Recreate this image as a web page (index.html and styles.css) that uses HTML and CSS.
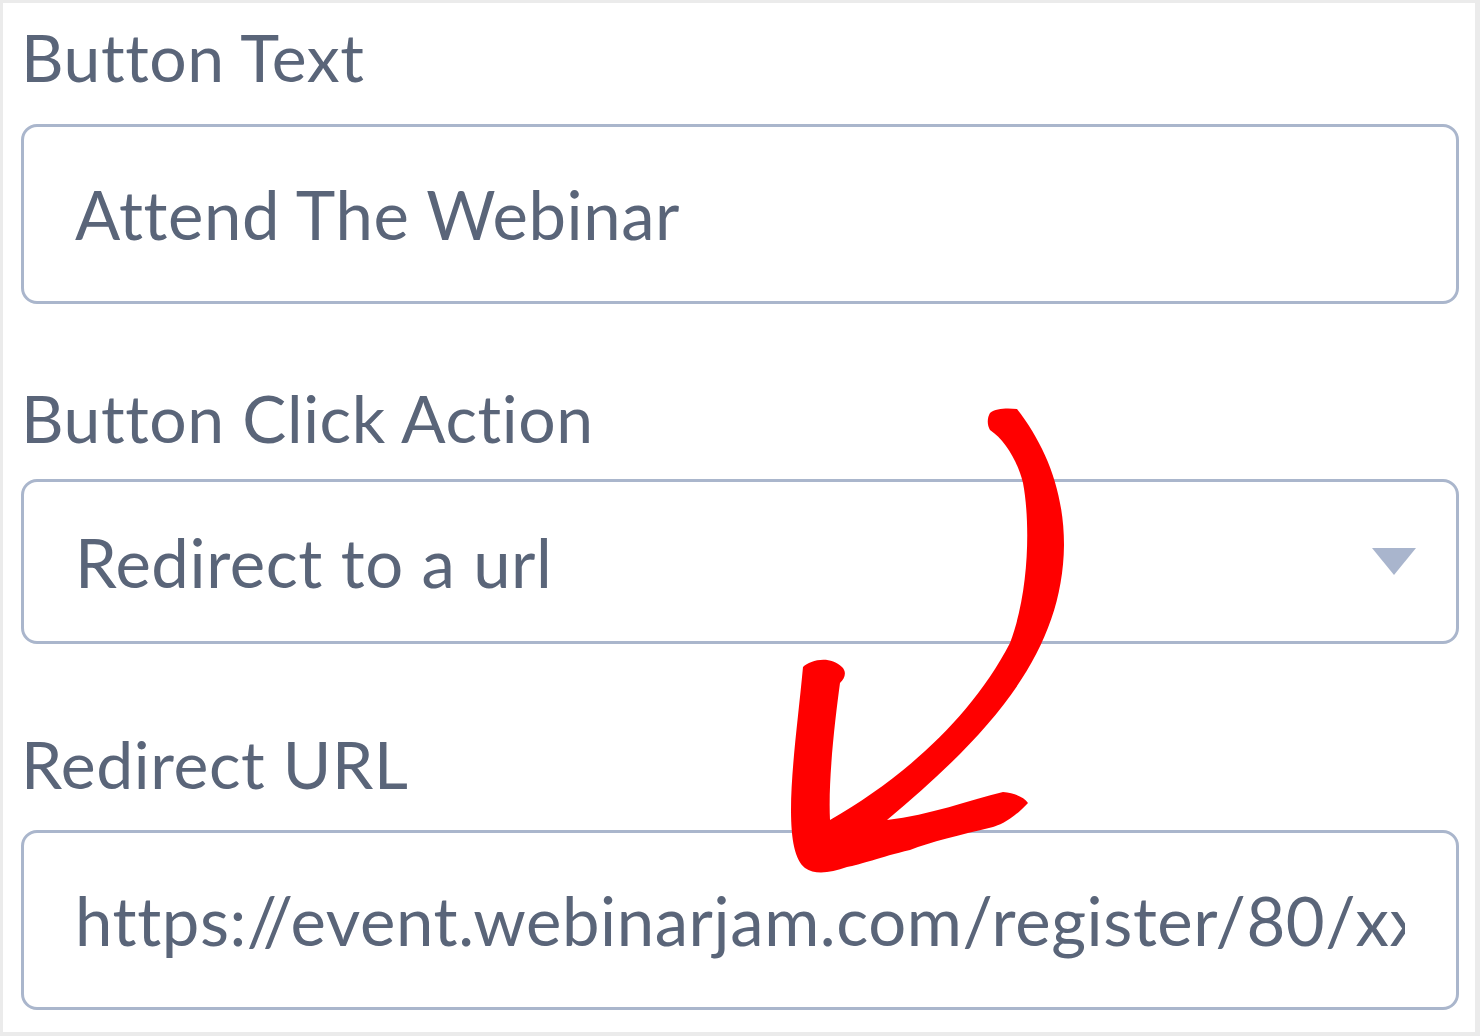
FILE: index.html
```html
<!DOCTYPE html>
<html lang="en">
<head>
<meta charset="utf-8">
<title>Button settings</title>
<link rel="stylesheet" href="styles.css">
</head>
<body>
<div class="frame">
  <div class="field field-first">
    <div class="label">Button Text</div>
    <div class="control control-tall">
      <span class="value">Attend The Webinar</span>
    </div>
  </div>
  <div class="field field-second">
    <div class="label">Button Click Action</div>
    <div class="control control-select">
      <span class="value">Redirect to a url</span>
      <span class="caret"></span>
    </div>
  </div>
  <div class="field field-third">
    <div class="label">Redirect URL</div>
    <div class="control control-tall">
      <span class="value value-clip">https://event.webinarjam.com/register/80/xxxxxxx</span>
    </div>
  </div>
  <svg class="arrow" width="1480" height="1036" viewBox="0 0 1480 1036" aria-hidden="true">
    <path fill="#ff0000" d="M 990 413 C 996 408 1008 408 1017 409 C 1045 445 1064 490 1064 545 C 1063 650 995 730 887 820 C 930 815 970 800 1003 792 C 1015 793 1024 797 1028 803 C 1012 820 1000 825 993 827 C 960 835 930 842 910 850 C 880 857 860 865 847 867 C 830 873 815 875 805 868 C 795 860 791 840 791 810 C 791 770 798 720 803 667 C 810 660 830 655 842 667 C 847 672 845 678 840 683 C 835 720 828 780 830 820 C 900 780 970 720 1010 643 C 1030 590 1030 520 1023 483 C 1018 462 1005 440 990 430 C 987 425 987 418 990 413 Z"/>
  </svg>
</div>
</body>
</html>
```

FILE: styles.css
```css
html, body {
  margin: 0;
  padding: 0;
  background: #ffffff;
}

.frame {
  position: relative;
  width: 1480px;
  height: 1036px;
  box-sizing: border-box;
  border-style: solid;
  border-color: #ebebeb;
  border-width: 3px 5px 4px 3px;
  padding: 0 16px 0 18px;
  background: #ffffff;
  font-family: "Lato", "Liberation Sans", sans-serif;
  font-variant-ligatures: none;
  letter-spacing: 0.6px;
  color: #5a6579;
  overflow: hidden;
}

.field {
  display: flex;
  flex-direction: column;
}

.label {
  font-size: 66px;
  line-height: 80px;
  height: 80px;
  white-space: nowrap;
}

.field-first .label { margin-top: 14px; margin-bottom: 27px; }
.field-second .label { margin-top: 74px; margin-bottom: 21px; }
.field-third .label { margin-top: 80px; margin-bottom: 26px; }

.control {
  box-sizing: border-box;
  border: 3px solid #aab6cc;
  border-radius: 16px;
  display: flex;
  align-items: center;
  padding: 0 51px 0 51px;
  font-size: 67px;
  overflow: hidden;
  white-space: nowrap;
}

.control-tall { height: 180px; }
.control-select { height: 165px; padding-right: 40px; justify-content: space-between; }

.value {
  display: block;
}

.value-clip {
  overflow: hidden;
  flex: 1;
  min-width: 0;
}

.caret {
  width: 0;
  height: 0;
  border-left: 22px solid transparent;
  border-right: 22px solid transparent;
  border-top: 27px solid #a9b5cd;
}

.arrow {
  position: absolute;
  left: -3px;
  top: -3px;
  pointer-events: none;
}
```
